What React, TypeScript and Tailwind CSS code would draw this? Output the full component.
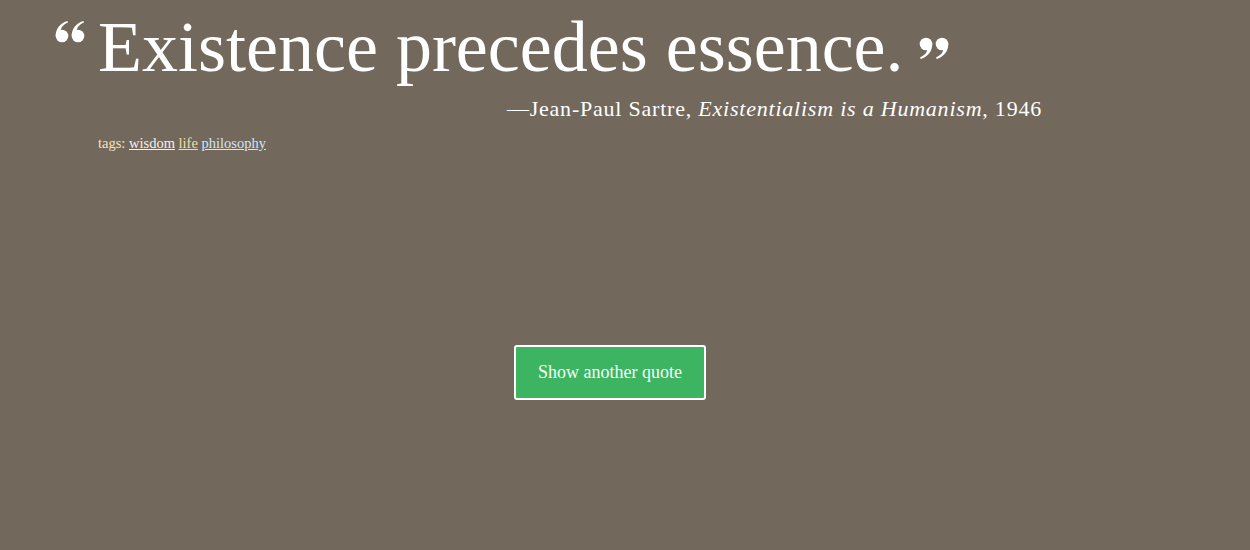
import React from "react";

function Six({ x }: { x: number }) {
  return (
    <g transform={`translate(${x} 0)`}>
      <circle cx="6.5" cy="15" r="6.3" />
      <path d="M0.3 15.5 C-0.2 8.5 4 2.5 11.8 0 L12.5 1.6 C7.5 3.8 5 7 5.2 10.8 Z" />
    </g>
  );
}

function Quote({ flip }: { flip?: boolean }) {
  return (
    <svg
      width="30"
      height="22"
      viewBox="0 0 30 22"
      fill="white"
      className={flip ? "rotate-180" : ""}
    >
      <Six x={0.5} />
      <Six x={16.5} />
    </svg>
  );
}

export default function App() {
  const serif = { fontFamily: '"Liberation Serif", "DejaVu Serif", serif' };
  return (
    <div className="w-[1250px] h-[550px] bg-[#72685c] text-white overflow-hidden" style={serif}>
      <div className="pl-[55px] pt-[8px]">
        <div className="flex items-start">
          <span className="mt-[13px] w-[43px] block">
            <Quote />
          </span>
          <h1 className="text-[72px] leading-[78px] font-normal">Existence precedes essence.</h1>
          <span className="mt-[29px] ml-[15px] block">
            <Quote flip />
          </span>
        </div>
        <div className="w-[987px] text-right text-[22px] tracking-[0.78px] mt-[6px]">
          —Jean-Paul Sartre, <i>Existentialism is a Humanism</i>, 1946
        </div>
        <div className="ml-[43px] mt-[8px] text-[14.5px] text-[#f3e4c4]">
          tags: <a className="underline text-[#f4f1ec]" href="#">wisdom</a>{" "}
          <a className="underline text-[#f2dfa0]" href="#">life</a>{" "}
          <a className="underline text-[#cfe5ff]" href="#">philosophy</a>
        </div>
      </div>
      <div className="mt-[190px] ml-[514px]">
        <button className="w-[192px] h-[55px] bg-[#3cb462] border-2 border-white rounded-[3px] text-[18px] text-[#f4fff6]">
          Show another quote
        </button>
      </div>
    </div>
  );
}
